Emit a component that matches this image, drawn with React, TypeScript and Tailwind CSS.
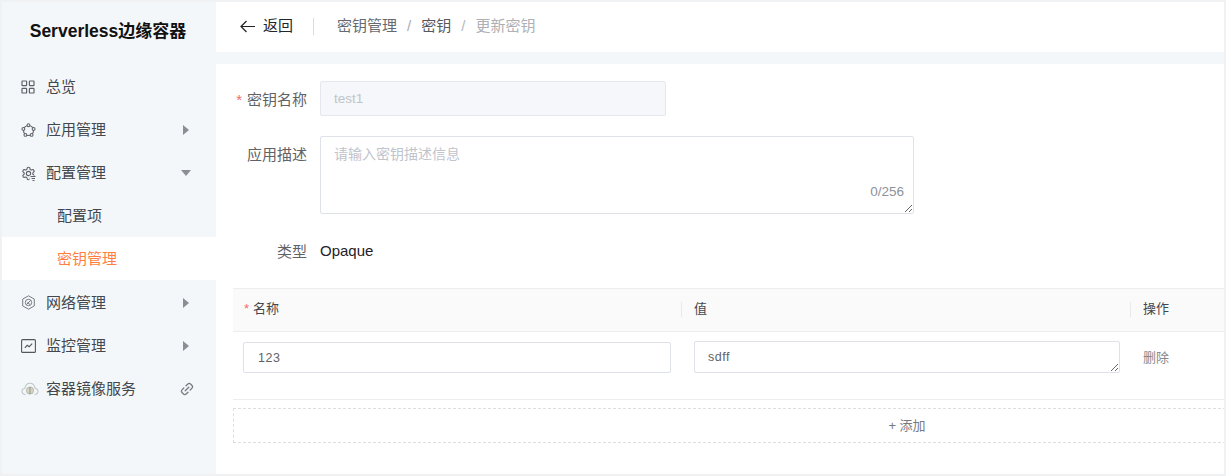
import React from "react";

const sans = "font-['Liberation_Sans','Noto_Sans_CJK_SC',sans-serif]";

const IconOverview = () => (
  <svg width="14" height="14" viewBox="0 0 14 14" fill="none" stroke="#5f6368" strokeWidth="1.2">
    <rect x="1" y="1" width="4.6" height="4.6" rx="0.6" />
    <rect x="8.4" y="1" width="4.6" height="4.6" rx="0.6" />
    <rect x="1" y="8.4" width="4.6" height="4.6" rx="0.6" />
    <rect x="8.4" y="8.4" width="4.6" height="4.6" rx="0.6" />
  </svg>
);

const IconApp = () => (
  <svg width="15" height="15" viewBox="0 0 15 15" fill="#f4f7f9" stroke="#5f6368" strokeWidth="1.1">
    <circle cx="7.5" cy="7.5" r="5" />
    <circle cx="7.5" cy="2.2" r="1.4" />
    <circle cx="12.6" cy="5.9" r="1.4" />
    <circle cx="10.6" cy="11.9" r="1.4" />
    <circle cx="4.4" cy="11.9" r="1.4" />
    <circle cx="2.4" cy="5.9" r="1.4" />
  </svg>
);

const IconConfig = () => (
  <svg width="15" height="15" viewBox="0 0 15 15" fill="none" stroke="#5f6368">
    <g transform="scale(0.625)" strokeWidth="1.8">
      <path d="M12.22 2h-.44a2 2 0 0 0-2 2v.18a2 2 0 0 1-1 1.73l-.43.25a2 2 0 0 1-2 0l-.15-.08a2 2 0 0 0-2.73.73l-.22.38a2 2 0 0 0 .73 2.73l.15.1a2 2 0 0 1 1 1.72v.51a2 2 0 0 1-1 1.74l-.15.09a2 2 0 0 0-.73 2.73l.22.38a2 2 0 0 0 2.73.73l.15-.08a2 2 0 0 1 2 0l.43.25a2 2 0 0 1 1 1.73V20a2 2 0 0 0 2 2h.44a2 2 0 0 0 2-2v-.18a2 2 0 0 1 1-1.73l.43-.25a2 2 0 0 1 2 0l.15.08a2 2 0 0 0 2.73-.73l.22-.39a2 2 0 0 0-.73-2.73l-.15-.08a2 2 0 0 1-1-1.74v-.5a2 2 0 0 1 1-1.74l.15-.09a2 2 0 0 0 .73-2.73l-.22-.38a2 2 0 0 0-2.73-.73l-.15.08a2 2 0 0 1-2 0l-.43-.25a2 2 0 0 1-1-1.73V4a2 2 0 0 0-2-2z" />
      <circle cx="12" cy="12" r="3.4" />
    </g>
    <rect x="8.500" y="9.500" width="6.500" height="5.500" fill="#f4f7f9" stroke="none" />
    <path d="M9.500 10.500h5M10.500 12.500h3.500M11.500 14.500h2" strokeWidth="1" />
  </svg>
);

const IconNetwork = () => (
  <svg width="15" height="15" viewBox="0 0 15 15" fill="none" stroke="#777c82" strokeWidth="1">
    <path d="M7.500 .8l5.800 3.300v6.800l-5.800 3.300-5.800-3.300V4.100z" />
    <circle cx="7.500" cy="7.500" r="3.200" />
    <path d="M5.500 9.500l4-4M6.500 7.500l2.500 2" />
  </svg>
);

const IconMonitor = () => (
  <svg width="15" height="14" viewBox="0 0 15 14" fill="none" stroke="#55565c" strokeWidth="1.1">
    <rect x=".6" y=".6" width="13.800" height="12.800" rx="1" />
    <path d="M3.800 8.800l2.400-2.500 2 1.400 3-3" />
  </svg>
);

const IconCloud = () => (
  <svg width="18" height="14" viewBox="0 0 18 14" fill="none">
    <path d="M4.500 12.500C2 12.500.8 10.500 1 9c.2-1.500 1.500-2.500 2.800-2.500C4.300 3.500 6.500 1.200 9 1.200s4.700 2.300 5.200 5.300c1.300 0 2.600 1 2.800 2.500.2 1.500-1 3.500-3.500 3.500" stroke="#bfc5c9" strokeWidth="1.100" />
    <circle cx="9" cy="8.500" r="3.600" fill="#d9d4bf" stroke="#a9b0a8" strokeWidth=".8" />
    <path d="M9 5v7" stroke="#8c9490" strokeWidth="1" />
  </svg>
);

const IconLink = () => (
  <svg width="14" height="14" viewBox="0 0 14 14" fill="none" stroke="#777c82" strokeWidth="1.300" strokeLinecap="round">
    <path d="M6 3.800l1.600-1.600a2.300 2.300 0 0 1 3.200 0l1 1a2.300 2.300 0 0 1 0 3.200L10.200 8" />
    <path d="M8 10.200l-1.600 1.600a2.300 2.300 0 0 1-3.200 0l-1-1a2.300 2.300 0 0 1 0-3.200L3.800 6" />
    <path d="M5.200 8.800l3.600-3.600" />
  </svg>
);

const CaretRight = () => (
  <span className="h-0 w-0 border-y-[5px] border-l-[6px] border-y-transparent border-l-[#8a8f96]" />
);

const CaretDown = () => (
  <span className="-mr-[2px] h-0 w-0 border-x-[5.500px] border-t-[6px] border-x-transparent border-t-[#8a8f96]" />
);

function MenuItem({ icon, label, trailing }: { icon: React.ReactNode; label: string; trailing?: React.ReactNode }) {
  return (
    <div className="flex h-[43.150px] items-center pl-[18px] pr-[27px] pt-[2px] text-[15px] text-[#43474d]">
      <span className="flex w-[26px] items-center pl-px">{icon}</span>
      <span>{label}</span>
      <span className="ml-auto flex items-center">{trailing}</span>
    </div>
  );
}

function Sidebar() {
  return (
    <aside className="flex w-[214px] shrink-0 flex-col bg-[#f4f7f9]">
      <div className="flex h-[62.500px] shrink-0 items-center justify-center pb-[4px] pr-[2px] text-[17px] font-bold text-[#111]">
        <span className="text-[17.500px]">Serverless</span>边缘容器
      </div>
      <MenuItem icon={<IconOverview />} label="总览" />
      <MenuItem icon={<IconApp />} label="应用管理" trailing={<CaretRight />} />
      <MenuItem icon={<IconConfig />} label="配置管理" trailing={<CaretDown />} />
      <div className="flex h-[43.150px] items-center pl-[55px] pt-[2px] text-[15px] text-[#43474d]">配置项</div>
      <div className="flex h-[43.150px] items-center bg-white pl-[55px] pt-[2px] text-[15px] text-[#ff7f41]">密钥管理</div>
      <MenuItem icon={<IconNetwork />} label="网络管理" trailing={<CaretRight />} />
      <MenuItem icon={<IconMonitor />} label="监控管理" trailing={<CaretRight />} />
      <MenuItem icon={<IconCloud />} label="容器镜像服务" trailing={<span className="-mr-[5px]"><IconLink /></span>} />
    </aside>
  );
}

function Header() {
  return (
    <div className="flex h-[50px] shrink-0 items-center bg-white pb-[2px] pl-[24px] text-[15px]">
      <svg width="15" height="13" viewBox="0 0 15 13" fill="none" stroke="#222" strokeWidth="1.200">
        <path d="M15 6.500H1M6.500 1L1 6.500 6.500 12" />
      </svg>
      <span className="ml-[8px] text-[#22252a]">返回</span>
      <span className="ml-[20px] h-[17px] w-px bg-[#d8dce2]" />
      <span className="ml-[23px] text-[#666a70]">密钥管理</span>
      <span className="mx-[10px] text-[#a9adb3]">/</span>
      <span className="text-[#55585e]">密钥</span>
      <span className="mx-[10px] text-[#b5b9be]">/</span>
      <span className="text-[#adb0b5]">更新密钥</span>
    </div>
  );
}

function FormRow({ label, required, className, labelClass, children }: { label: string; required?: boolean; className?: string; labelClass: string; children: React.ReactNode }) {
  return (
    <div className={`flex ${className ?? ""}`}>
      <label className={`flex w-[104px] shrink-0 justify-end pr-[13px] text-[15px] text-[#5f6368] ${labelClass}`}>
        {required && <span className="mr-[5px] text-[#f56c6c]">*</span>}
        {label}
      </label>
      {children}
    </div>
  );
}

function KeyTable() {
  return (
    <div className="ml-[17px] mt-[18px] w-[1348px] text-[13px]">
      <div className="flex h-[44px] items-center border-y border-[#ededed] bg-[#fafafa] pb-[2px] text-[#44474c]">
        <div className="flex w-[448px] pl-[11px]">
          <span className="mr-[4px] text-[#f56c6c]">*</span>名称
        </div>
        <div className="h-[15px] w-px bg-[#e9e9e9]" />
        <div className="w-[448px] pl-[12px]">值</div>
        <div className="h-[15px] w-px bg-[#e9e9e9]" />
        <div className="pl-[12px]">操作</div>
      </div>
      <div className="flex h-[68px] items-start border-b border-[#ededed] pt-[9px]">
        <div className="w-[449px] pl-[10px] pt-px">
          <input
            readOnly
            value="123"
            className="h-[31px] w-[428px] rounded-[2px] border border-[#dfe1e8] px-[14px] text-[12.500px] tracking-[0.5px] text-[#5f6368] outline-none"
          />
        </div>
        <div className="w-[449px] pl-[12px]">
          <textarea
            readOnly
            value="sdff"
            className="block h-[32px] w-[426px] rounded-[2px] border border-[#dfe1e8] px-[13px] py-[6px] text-[12.500px] tracking-[0.5px] text-[#5f6368] outline-none"
          />
        </div>
        <div className="pl-[12px] pt-[7px] text-[#85888d]">删除</div>
      </div>
      <div className="mt-[8px] flex h-[35px] items-center justify-center border border-dashed border-[#dcdee2] pt-[1px] text-[#777b81]">
        + 添加
      </div>
    </div>
  );
}

export default function App() {
  return (
    <div className={`${sans} flex h-[476px] w-[1226px] bg-[#f0f1f3] p-[2px]`}>
      <Sidebar />
      <main className="flex min-w-0 flex-1 flex-col overflow-hidden bg-[#f4f7f9]">
        <Header />
        <div className="mt-[12px] flex-1 bg-white pt-[17px]">
          <FormRow label="密钥名称" required labelClass="leading-[38px]">
            <input
              readOnly
              value="test1"
              className="h-[35px] w-[346px] rounded-[2px] border border-[#e4e7ed] bg-[#f5f7fa] px-[13px] text-[13.500px] text-[#c0c4cc] outline-none"
            />
          </FormRow>
          <FormRow label="应用描述" labelClass="leading-[38px]" className="mt-[17px]">
            <div className="relative h-[78px] w-[594px]">
              <textarea
                readOnly
                placeholder="请输入密钥描述信息"
                className="block h-full w-full rounded-[2px] border border-[#dfe1e8] px-[13px] py-[7px] text-[14px] outline-none placeholder:text-[#c0c4cc]"
              />
              <span className="absolute bottom-[16px] right-[10px] text-[13.500px] leading-none text-[#8d9299]">0/256</span>
            </div>
          </FormRow>
          <FormRow label="类型" labelClass="leading-[36px]" className="mt-[20px]">
            <span className="text-[15px] leading-[34px] text-[#1f2227]">Opaque</span>
          </FormRow>
          <KeyTable />
        </div>
      </main>
    </div>
  );
}
